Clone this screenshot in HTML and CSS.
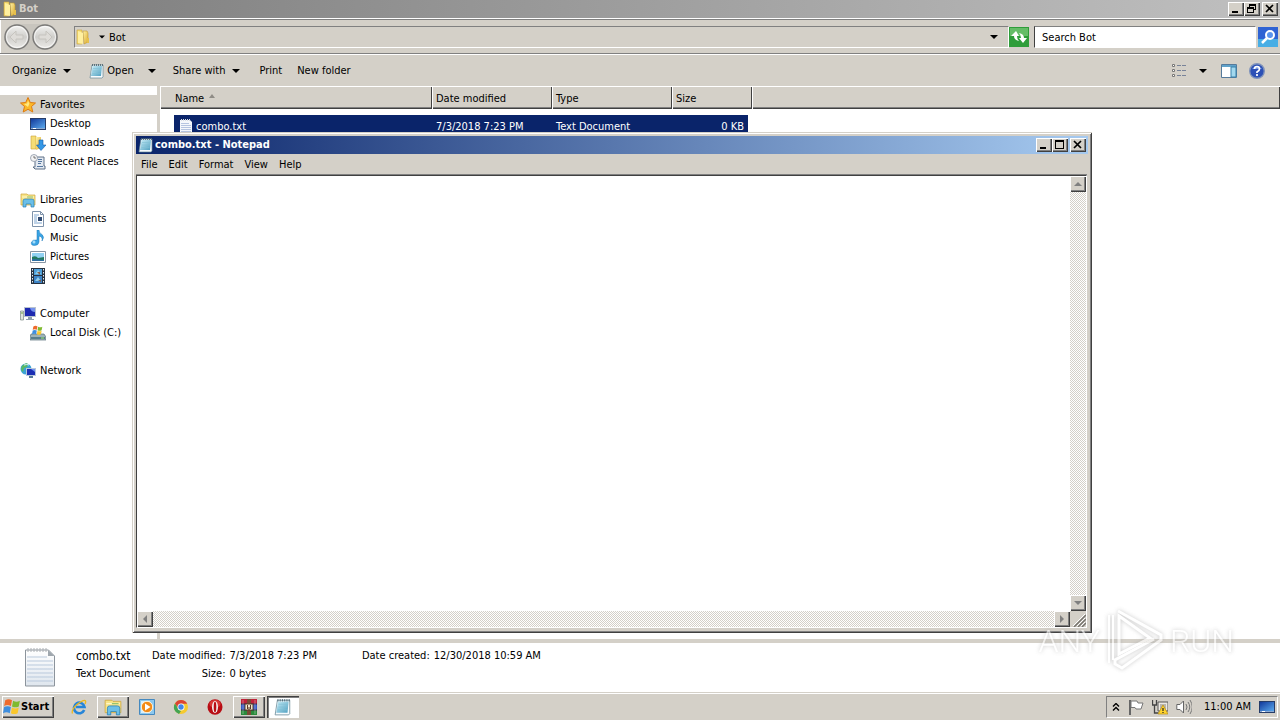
FILE: index.html
```html
<!DOCTYPE html>
<html lang="en">
<head>
<meta charset="utf-8">
<title>Bot</title>
<link rel="stylesheet" href="styles.css">
</head>
<body>
<svg class="defs" aria-hidden="true">
  <defs>
    <linearGradient id="gold" x2="1" y2="1"><stop offset="0" stop-color="#fff3a8"/><stop offset="1" stop-color="#dba92c"/></linearGradient>
    <linearGradient id="blue" x2="1" y2="1"><stop offset="0" stop-color="#123a9c"/><stop offset="1" stop-color="#5aa8ec"/></linearGradient>
    <linearGradient id="aqua" x2="1" y2="1"><stop offset="0" stop-color="#c9eef8"/><stop offset="1" stop-color="#4f9fc0"/></linearGradient>
    <linearGradient id="page" x2="0" y2="1"><stop offset="0" stop-color="#ffffff"/><stop offset="1" stop-color="#dfe6ee"/></linearGradient>
    <linearGradient id="disc" x2="0" y2="1"><stop offset="0" stop-color="#f4f4f2"/><stop offset=".5" stop-color="#cfcecb"/><stop offset="1" stop-color="#ecebe8"/></linearGradient>
    <symbol id="folder" viewBox="0 0 16 16"><path d="M2 1h5v14H2z" fill="#f5dd76" stroke="#c9a13a" stroke-width=".6"/><path d="M8 2h4l1 2v9l-4 2z" fill="url(#gold)" stroke="#c39a30" stroke-width=".6"/><path d="M3 2l5 2v11l-5-1z" fill="#fff0a0"/><path d="M12 9h2v5h-2z" fill="#e6c04c"/></symbol>
    <symbol id="notepad" viewBox="0 0 16 16"><path d="M3 2h11v12l-1 1H1z" fill="#f7fbfd" stroke="#668896" stroke-width=".7"/><path d="M3.500 3h9.500l-1 10H2z" fill="url(#aqua)"/><path d="M4 5.500h8.500M4 8h8M3.500 10.500h8" stroke="#7fbfd4" stroke-width=".6"/><path d="M3.500 1v2M5.500 1v2M7.500 1v2M9.500 1v2M11.500 1v2M13.500 1v2" stroke="#47606b" stroke-width=".8"/></symbol>
    <symbol id="txt" viewBox="0 0 32 40"><path d="M1.500 3h23l6 6v30h-29z" fill="url(#page)" stroke="#8c949c"/><path d="M24 3v6h6.500z" fill="#9fa7ae"/><path d="M3 10h20M3 14h26M3 18h26M3 22h26M3 26h26M3 30h26M3 34h26" stroke="#b9c9dc"/><path d="M4 1v4M7 1v4M10 1v4M13 1v4M16 1v4M19 1v4M22 1v4" stroke="#aeb2b6"/></symbol>
    <symbol id="txtsmall" viewBox="0 0 16 16"><path d="M2 2h10l2 2v12H2z" fill="#f4f7fb"/><path d="M3 5.500h8M3 7.500h10M3 9.500h10M3 11.500h10M3 13.500h10" stroke="#b5c4e0"/><path d="M3.500 1v2M5.500 1v2M7.500 1v2M9.500 1v2M11.500 1v2" stroke="#d8dce2"/></symbol>
    <symbol id="monitor" viewBox="0 0 16 16"><path d="M0 2h16v12H0z" fill="#263c68"/><path d="M1 3h14v9H1z" fill="url(#blue)"/><path d="M1 12h14v1H1z" fill="#8cabd4"/><path d="M3 12h3v1H3z" fill="#fff"/></symbol>
    <symbol id="library" viewBox="0 0 16 16"><path d="M1 2h6l1 1h7v10H1z" fill="#f7e488" stroke="#cfa63c" stroke-width=".7"/><path d="M2 5h12" stroke="#fff8ce"/><path d="M7 5h6" stroke="#8ec06a"/><path d="M3 15V9q0-2 2-2h7q2 0 2 2v6h-3v-3H6v3z" fill="#6bbfe8" stroke="#287fb5" stroke-width=".7"/></symbol>
    <symbol id="star" viewBox="0 0 16 16"><path d="M8 .5l2.300 5 5.200.5-4 3.500 1.300 5.500L8 12.300 3.200 15l1.300-5.500-4-3.500 5.200-.5z" fill="#fbb829" stroke="#dd7b12"/><path d="M8 3.500l1.400 3.200L8 10 4 7l3-.5z" fill="#ffe880"/></symbol>
    <symbol id="download" viewBox="0 0 16 16"><path d="M1 1h5v13H1z" fill="#f5dd76" stroke="#c9a13a" stroke-width=".6"/><path d="M6 2h5v11l-5 2z" fill="url(#gold)"/><path d="M9 5h4v5h3l-5 5.500L6.500 10H9z" fill="#3397e6" stroke="#145da8" stroke-width=".6"/></symbol>
    <symbol id="recent" viewBox="0 0 16 16"><path d="M5 3h9v9h1v3H5l-2-2h2z" fill="#e3e9f1" stroke="#5f7187"/><path d="M8 5.500h4M8 7.500h4M8 9.500h3M7 12.500h6" stroke="#5577a0"/><circle cx="4" cy="4" r="3.500" fill="#f3f3f3" stroke="#8b96a4" stroke-width=".8"/><path d="M4 2v2h2" fill="none" stroke="#555" stroke-width=".8"/></symbol>
    <symbol id="doc" viewBox="0 0 16 16"><path d="M2.500.5h8l3 3v12h-11z" fill="#fff" stroke="#7f93ab"/><path d="M10.500.5v3h3" fill="none" stroke="#7f93ab"/><path d="M4 4h5M4 6h3M4 8h3M4 10h3M4 12h8" stroke="#7fa6d0"/><path d="M8 6h4v4H8z" fill="#304b72"/></symbol>
    <symbol id="music" viewBox="0 0 16 16"><path d="M7 0l2 0q0 3 3 4.500Q15 7 12 11q1-4-3-5v6q-.5 3.500-4.500 3.500T1.500 12Q2.500 9.500 7 10z" fill="#3aa4e4" stroke="#1d79b9" stroke-width=".5"/><circle cx="4" cy="12" r="1.500" fill="#a4dcf9"/></symbol>
    <symbol id="picture" viewBox="0 0 16 16"><path d="M.5 2.500h15v11H.5z" fill="#fff" stroke="#8795a3"/><path d="M2 4h12v8H2z" fill="#91d1f2"/><path d="M2 8q4-2 6 1l6-1v4H2z" fill="#21795f"/><path d="M2 10q5 0 12 1v1H2z" fill="#2c6fa2"/></symbol>
    <symbol id="video" viewBox="0 0 16 16"><path d="M1 0h14v16H1z" fill="#263240"/><path d="M4 1h8v6H4z" fill="#4d9fd8"/><path d="M4 8h8v7H4z" fill="#3c83c6"/><path d="M5 6l3-4 3 4zM5 13l3-4 3 4z" fill="#8fcdea"/><path d="M7 4h3v3zM8 12h3v2z" fill="#805c4a"/><path d="M2.500 1v15M13.500 1v15" stroke="#e6eef5" stroke-dasharray="1.500 1.500"/></symbol>
    <symbol id="computer" viewBox="0 0 16 16"><path d="M.5 5h3v9h-3z" fill="#dfe5dc" stroke="#7c8a85" stroke-width=".7"/><path d="M1 7h2" stroke="#6ba23e"/><path d="M4 1h12v10H4z" fill="#b8c2cf"/><path d="M5 2h10v8H5z" fill="#1d29b0"/><path d="M10 2h5v4q-4 0-5-4z" fill="#7390ed"/><path d="M8 11h4v2h2v1H6v-1h2z" fill="#8fa0b0"/></symbol>
    <symbol id="flag4" viewBox="0 0 16 16"><path d="M2 2q3-2 6 0L7 7Q4 5.500 1 7z" fill="#ee6b2d"/><path d="M9 2.500q3 1.500 6 0L14 7.500q-3 1.500-6 0z" fill="#7fba30"/><path d="M1 8q3-1.500 6 0l-1 5.500Q3 12 0 13.500z" fill="#3e8ede"/><path d="M8 8.500q3 1.500 6 0L13 13.500q-3 1.500-6 0z" fill="#fac72c"/></symbol>
    <symbol id="disk" viewBox="0 0 16 16"><path d="M1 9h13l2 3v3H0v-3z" fill="#9db2b8" stroke="#5a717b" stroke-width=".7"/><path d="M1 12h14v2H1z" fill="#587d8b"/><path d="M11 13h3" stroke="#9fec70"/><use href="#flag4" x="2" y="0" width="11" height="11"/></symbol>
    <symbol id="network" viewBox="0 0 16 16"><circle cx="6" cy="6" r="5.500" fill="#3ba3d6"/><path d="M2 3q4-4 6-2l-1 3-3 1-1 4Q0 7 2 3z" fill="#59b963"/><path d="M4 2q3-1 5 0" stroke="#d9f4ff" fill="none"/><path d="M6 5h10v8H6z" fill="#b9c8da"/><path d="M7 6h8v6H7z" fill="#1b2fb4"/><path d="M11 6h4v3z" fill="#6f92f0"/><path d="M9 13h4v2H9z" fill="#587b9a"/></symbol>
    <symbol id="ie" viewBox="0 0 16 16"><path d="M13.200 11A5.300 5.300 0 1 1 13.500 8H5" fill="none" stroke="#2685d8" stroke-width="2.600"/><path d="M1.500 14.500Q0 11 6 5.500 13 0 14.500 2q.5 1-.5 3" fill="none" stroke="#edb91e" stroke-width="1.300"/></symbol>
    <symbol id="wmp" viewBox="0 0 16 16"><path d="M.5.5h15v15H.5z" fill="#8cc8ee" stroke="#4589bf"/><path d="M2 2h9v12H2z" fill="#d7effc"/><circle cx="8" cy="8" r="5.700" fill="#f38b16" stroke="#fff3dc"/><path d="M6 4.500L11.500 8 6 11.500z" fill="#fff"/></symbol>
    <symbol id="chrome" viewBox="0 0 16 16"><circle cx="8" cy="8" r="7" fill="#f5ca2e"/><path d="M2 4.500A7 7 0 0 1 14.200 4.700H8L5 9z" fill="#dc4334"/><path d="M2 4.500L6 11l2 1-2 3A7 7 0 0 1 2 4.500z" fill="#43a454"/><circle cx="8" cy="8" r="3.500" fill="#fff"/><circle cx="8" cy="8" r="2.700" fill="#4386e8"/></symbol>
    <symbol id="opera" viewBox="0 0 16 16"><ellipse cx="8" cy="8" rx="7.500" ry="7.700" fill="#b80d14"/><ellipse cx="8" cy="5" rx="5.500" ry="4" fill="#d93836"/><ellipse cx="8" cy="8" rx="3" ry="6" fill="#f2f0ee"/><ellipse cx="8" cy="8" rx="1.300" ry="5.300" fill="#b80d14"/></symbol>
    <symbol id="rar" viewBox="0 0 18 18"><path d="M1 1h16v5H1z" fill="#c0223a"/><path d="M1 6h16v6H1z" fill="#3557c1"/><path d="M1 12h16v5H1z" fill="#2c8a3c"/><path d="M1 6h16M1 12h16" stroke="#332443"/><path d="M7 1h4v16H7z" fill="#7c4a35"/><path d="M5 6h8v6H5z" fill="#f0e6cc" stroke="#5a402c"/><path d="M7.500 7v4M10.500 7v4M9 9v3" stroke="#5b3a29"/><path d="M3 2v14M15 2v14" stroke="#fff" stroke-opacity=".35"/></symbol>
    <symbol id="min" viewBox="0 0 12 10"><path d="M2 7h6v2H2z"/></symbol>
    <symbol id="max" viewBox="0 0 12 10"><path d="M1 0h9v9H1zM2 2v6h7V2z" fill-rule="evenodd"/></symbol>
    <symbol id="restore" viewBox="0 0 12 10"><path d="M3 0h7v6H8v3H1V3h2zM4 2v1h4v2h1V2zM2 5v3h5V5z" fill-rule="evenodd"/></symbol>
    <symbol id="close" viewBox="0 0 12 10"><path d="M2 1l7 7M9 1L2 8" stroke="#000" stroke-width="1.700"/></symbol>
    <symbol id="down" viewBox="0 0 8 8"><path d="M0 2h8L4 6z"/></symbol>
    <symbol id="arrowback" viewBox="0 0 26 26"><circle cx="13" cy="13" r="12" fill="url(#disc)" stroke="#7b7a78" stroke-width="1.400"/><circle cx="13" cy="13" r="10.500" fill="none" stroke="#fff" stroke-opacity=".7"/><path d="M6 13l6-6v4h7v4h-7v4z" fill="#dedcd8" stroke="#c6c4bf"/></symbol>
  </defs>
</svg>

<main class="explorer">
  <header class="titlebar inactive">
    <svg class="i16"><use href="#folder"/></svg><h1>Bot</h1>
    <div class="winbtns">
      <button class="raised" aria-label="Minimize"><svg><use href="#min"/></svg></button><button class="raised" aria-label="Restore"><svg><use href="#restore"/></svg></button><button class="raised apart" aria-label="Close"><svg><use href="#close"/></svg></button>
    </div>
  </header>

  <div class="addressbar">
    <div class="navbtns">
      <button aria-label="Back"><svg><use href="#arrowback"/></svg></button>
      <button aria-label="Forward"><svg class="flip"><use href="#arrowback"/></svg></button>
    </div>
    <div class="path">
      <svg class="i16"><use href="#folder"/></svg>
      <button class="crumb"><svg class="tiny"><use href="#down"/></svg>Bot</button>
      <button class="drop" aria-label="Previous locations"><svg class="i8"><use href="#down"/></svg></button>
    </div>
    <button class="refresh" aria-label="Refresh"><svg viewBox="0 0 20 20"><path d="M0 0h20v20H0z" fill="#2f9d3a"/><path d="M1 1h18v8H1z" fill="#65bd67"/><path d="M2 9l5-5 3 5H8q0 3 2 5-5-1-5-5zM18 11l-4 5-4-5h2q0-3-2-5 5 1 5 5z" fill="#fff"/></svg></button>
    <input class="search" type="text" value="Search Bot" aria-label="Search Bot">
    <button class="go" aria-label="Search"><svg viewBox="0 0 20 20"><path d="M0 0h20v20H0z" fill="#2f63d3"/><path d="M0 12h20v8H0z" fill="#48aee5"/><circle cx="12" cy="8" r="4" fill="#5a94ed" stroke="#fff" stroke-width="2"/><path d="M9 11l-5 5" stroke="#fff" stroke-width="2.500"/></svg></button>
  </div>

  <div class="toolbar">
    <button>Organize<svg class="i8"><use href="#down"/></svg></button>
    <button class="open"><svg class="i16"><use href="#notepad"/></svg>Open<svg class="i8 far"><use href="#down"/></svg></button>
    <button class="share">Share with<svg class="i8"><use href="#down"/></svg></button>
    <button class="print">Print</button>
    <button>New folder</button>
    <div class="views">
      <button aria-label="Change view"><svg class="i16" viewBox="0 0 16 16"><path d="M1.500 1.500h2v2h-2zM1.500 6.500h2v2h-2zM1.500 11.500h2v2h-2z" fill="#fff" stroke="#777"/><path d="M6 2.500h4M11 2.500h4M6 7.500h4M11 7.500h4M6 12.500h4M11 12.500h4" stroke="#788399"/></svg></button>
      <button aria-label="More views"><svg class="i8"><use href="#down"/></svg></button>
      <button aria-label="Preview pane"><svg class="i16" viewBox="0 0 16 16"><path d="M.5 1.500h15v13H.5z" fill="#fff" stroke="#557a9b"/><path d="M1 2h14v2H1z" fill="#5fa2ca"/><path d="M10 4h5v10h-5z" fill="#a2d8ee" stroke="#3980aa"/></svg></button>
      <button aria-label="Help"><svg class="i16" viewBox="0 0 16 16"><circle cx="8" cy="8" r="7.300" fill="#2c50b6" stroke="#7f93bb" stroke-width="1.400"/><path d="M3 6q5-6 10 0z" fill="#7a9ce5"/><path d="M5.500 6q0-2.500 2.500-2.500T10.500 6Q10.500 7.500 8 9v1M8 11v2" fill="none" stroke="#fff" stroke-width="1.700"/></svg></button>
    </div>
  </div>

  <div class="content">
    <nav class="tree">
      <ul>
        <li><a class="top selected" href="#"><svg class="i16"><use href="#star"/></svg>Favorites</a></li>
        <li><a href="#"><svg class="i16"><use href="#monitor"/></svg>Desktop</a></li>
        <li><a href="#"><svg class="i16"><use href="#download"/></svg>Downloads</a></li>
        <li><a href="#"><svg class="i16"><use href="#recent"/></svg>Recent Places</a></li>
      </ul>
      <ul>
        <li><a class="top" href="#"><svg class="i16"><use href="#library"/></svg>Libraries</a></li>
        <li><a href="#"><svg class="i16"><use href="#doc"/></svg>Documents</a></li>
        <li><a href="#"><svg class="i16"><use href="#music"/></svg>Music</a></li>
        <li><a href="#"><svg class="i16"><use href="#picture"/></svg>Pictures</a></li>
        <li><a href="#"><svg class="i16"><use href="#video"/></svg>Videos</a></li>
      </ul>
      <ul>
        <li><a class="top" href="#"><svg class="i16"><use href="#computer"/></svg>Computer</a></li>
        <li><a href="#"><svg class="i16"><use href="#disk"/></svg>Local Disk (C:)</a></li>
      </ul>
      <ul>
        <li><a class="top" href="#"><svg class="i16"><use href="#network"/></svg>Network</a></li>
      </ul>
    </nav>
    <section class="files">
      <table>
        <colgroup><col class="c-name"><col class="c-mid"><col class="c-mid"><col class="c-size"><col></colgroup>
        <thead><tr><th class="name">Name<svg class="sort" viewBox="0 0 6 4"><path d="M0 4h6L3 0z" fill="#8f8c86"/></svg></th><th>Date modified</th><th>Type</th><th>Size</th><th></th></tr></thead>
        <tbody><tr><td><div class="cell first"><svg class="i16"><use href="#txtsmall"/></svg>combo.txt</div></td><td><div class="cell">7/3/2018 7:23 PM</div></td><td><div class="cell">Text Document</div></td><td><div class="cell last">0 KB</div></td><td></td></tr></tbody>
      </table>
    </section>
  </div>

  <footer class="details">
    <svg class="big"><use href="#txt"/></svg>
    <div class="about"><strong>combo.txt</strong><span>Text Document</span></div>
    <dl class="props"><dt>Date modified:</dt><dd>7/3/2018 7:23 PM</dd><dt>Size:</dt><dd>0 bytes</dd></dl>
    <dl class="props created"><dt>Date created:</dt><dd>12/30/2018 10:59 AM</dd></dl>
  </footer>
</main>

<section class="notepad" aria-label="combo.txt - Notepad">
  <header class="titlebar active">
    <svg class="i16"><use href="#notepad"/></svg><h2>combo.txt - Notepad</h2>
    <div class="winbtns">
      <button class="raised" aria-label="Minimize"><svg><use href="#min"/></svg></button><button class="raised" aria-label="Maximize"><svg><use href="#max"/></svg></button><button class="raised apart" aria-label="Close"><svg><use href="#close"/></svg></button>
    </div>
  </header>
  <div class="menu"><button>File</button><button>Edit</button><button>Format</button><button>View</button><button>Help</button></div>
  <div class="editor">
    <textarea aria-label="Text"></textarea>
    <div class="scroll vert">
      <button class="raised" aria-label="Scroll up"><svg class="i8"><path d="M0 6h8L4 2z"/></svg></button>
      <button class="raised" aria-label="Scroll down"><svg class="i8"><path d="M0 2h8L4 6z"/></svg></button>
    </div>
    <div class="scroll">
      <button class="raised" aria-label="Scroll left"><svg class="i8"><path d="M6 0v8L2 4z"/></svg></button>
      <button class="raised" aria-label="Scroll right"><svg class="i8"><path d="M2 0v8l4-4z"/></svg></button>
    </div>
    <svg class="grip" viewBox="0 0 16 16"><path d="M4 16L16 4M8 16l8-8M12 16l4-4" stroke="#77746e" stroke-width="1.500"/><path d="M3 15L15 3M7 15l8-8M11 15l4-4" stroke="#fff"/></svg>
  </div>
</section>

<div class="watermark" aria-hidden="true">
  <span>ANY</span>
  <svg viewBox="0 0 60 66"><path d="M4 7v48M8 7v45" fill="none" stroke="#fff" stroke-width="2"/><path d="M14 8v38l31-16z" fill="none" stroke="#fff" stroke-width="3"/><path d="M13 3l43 24v5L17 60l-7-4v-4l39-21" fill="none" stroke="#fff" stroke-width="3"/></svg>
  <span>RUN</span>
</div>

<footer class="taskbar">
  <button class="start raised"><svg class="i18"><use href="#flag4"/></svg>Start</button>
  <div class="tasks">
    <button aria-label="Internet Explorer"><svg class="i16"><use href="#ie"/></svg></button>
    <button class="raised" aria-label="Windows Explorer"><svg class="i18"><use href="#library"/></svg></button>
    <button aria-label="Media Player"><svg class="i16"><use href="#wmp"/></svg></button>
    <button aria-label="Chrome"><svg class="i16"><use href="#chrome"/></svg></button>
    <button aria-label="Opera"><svg class="i16"><use href="#opera"/></svg></button>
    <button class="raised" aria-label="WinRAR"><svg class="i18"><use href="#rar"/></svg></button>
    <button class="pressed" aria-label="Notepad"><svg class="i18"><use href="#notepad"/></svg></button>
  </div>
  <div class="tray">
    <button aria-label="Show hidden icons"><svg class="i8" viewBox="0 0 8 8"><path d="M1 3.500l3-3 3 3M1 7.500l3-3 3 3" fill="none" stroke="#000" stroke-width="1.400"/></svg></button>
    <svg class="i16" viewBox="0 0 16 16"><path d="M2 1v15" stroke="#666" stroke-width="2"/><path d="M3 2h6l1 2h5l-2 6H8L7 8.500H3z" fill="#fff" stroke="#777"/></svg>
    <svg class="i16" viewBox="0 0 16 16"><path d="M6 3h10v9H6z" fill="#ece9e3" stroke="#555"/><path d="M8 5h6v5H8z" fill="#b9b6b0"/><path d="M.5 1v5h4V1M2.500 6v8h4" fill="none" stroke="#444" stroke-width="1.300"/><path d="M11 6l5 9H6z" fill="#ffd42e" stroke="#b88c10" stroke-width=".7"/><path d="M11 9v3M11 13v1" stroke="#222" stroke-width="1.200"/></svg>
    <svg class="i16" viewBox="0 0 16 16"><path d="M.8 5.500H4L7.500 2v12L4 10.500H.8z" fill="#fff" stroke="#666"/><path d="M10 5q2 3 0 6M12 3q3.500 5 0 10M14 1q4.500 7 0 14" fill="none" stroke="#777"/></svg>
    <time>11:00 AM</time>
    <button aria-label="Show desktop"><svg class="i16"><use href="#monitor"/></svg></button>
  </div>
</footer>
</body>
</html>
```
FILE: styles.css
```css
* { box-sizing: border-box; }

body {
  margin: 0;
  height: 100vh;
  display: flex;
  flex-direction: column;
  overflow: hidden;
  background: #d4d0c8;
  color: #000;
  font: 11px/15px "DejaVu Sans Condensed", "DejaVu Sans", sans-serif;
}

button, input, textarea {
  font: inherit;
  color: inherit;
  border: 0;
  padding: 0;
  margin: 0;
  background: none;
  border-radius: 0;
}
button { display: flex; align-items: center; white-space: nowrap; }
ul, dl, dd, h1, h2 { margin: 0; padding: 0; list-style: none; }
a { color: inherit; text-decoration: none; }
svg { display: block; flex: none; }

.defs { position: absolute; width: 0; height: 0; }
.i8 { width: 8px; height: 8px; }
.i16 { width: 16px; height: 16px; }
.i18 { width: 18px; height: 18px; }

.raised {
  background: #d4d0c8;
  box-shadow: inset 1px 1px #fff, inset -1px -1px #404040, inset -2px -2px #808080;
}
.pressed {
  background: #fff;
  box-shadow: inset 1px 1px #404040, inset 2px 2px #808080, inset -1px -1px #fff;
}

/* Window chrome */
.explorer { flex: 1; min-height: 0; display: flex; flex-direction: column; }
.titlebar { display: flex; align-items: center; gap: 1px; height: 18px; flex: none; padding: 0 2px; }
.titlebar h1, .titlebar h2 { font-size: 11px; line-height: 18px; font-weight: bold; }
.inactive { background: linear-gradient(90deg, #7c7c7c, #c0c0c0); color: #d4d0c8; }
.active { background: linear-gradient(90deg, #0a246a, #a6caf0); color: #fff; }
.winbtns { display: flex; margin-left: auto; }
.winbtns button { width: 16px; height: 14px; padding: 2px; }
.winbtns svg { width: 12px; height: 10px; }
.winbtns .apart { margin-left: 2px; }

/* Address bar */
.addressbar {
  flex: none;
  display: flex;
  align-items: center;
  height: 36px;
  padding: 2px 2px 0 4px;
  border-top: 1px solid #fff;
  border-bottom: 1px solid #808080;
  box-shadow: inset 0 1px #808080, inset 1px 0 #fff;
}
.navbtns { display: flex; gap: 2px; background: #c8c5be; border-radius: 14px; }
.navbtns svg { width: 26px; height: 26px; }
.flip { transform: scaleX(-1); }
.path {
  flex: 1;
  display: flex;
  align-items: center;
  height: 22px;
  margin-left: 16px;
  border: 1px solid;
  border-color: #808080 #fff #fff #808080;
}
.tiny { width: 6px; height: 6px; }
.crumb { gap: 4px; margin-left: 8px; }
.drop { margin-left: auto; padding: 0 10px; }
.refresh svg, .go svg { width: 20px; height: 20px; }
.search {
  width: 222px;
  height: 22px;
  margin: 0 2px 0 5px;
  padding: 0 7px;
  background: #fff;
  border: 1px solid;
  border-color: #808080 #fff #fff #404040;
}

/* Command bar */
.toolbar {
  flex: none;
  display: flex;
  align-items: center;
  height: 32px;
  padding: 0 15px 0 12px;
  border-top: 1px solid #fff;
}
.toolbar .i8 { margin-left: 7px; }
.toolbar .i8.far { margin-left: 14px; }
.open { margin-left: 18px; }
.open .i16 { margin-right: 2px; }
.share { margin-left: 17px; }
.print { margin: 0 15px 0 19px; }
.views { display: flex; align-items: center; gap: 12px; margin-left: auto; }
.toolbar .views .i8 { margin: 0 2px 0 0; }

/* Content */
.content { flex: 1; min-height: 0; display: flex; background: #fff; }
.tree {
  flex: none;
  width: 160px;
  padding-top: 9px;
  border-right: 3px solid #d4d0c8;
}
.tree ul { margin-bottom: 19px; }
.tree a { display: flex; align-items: center; gap: 4px; height: 19px; padding-left: 30px; line-height: 19px; }
.tree .top { padding-left: 20px; }
.tree .selected { background: #d4d0c8; }

.files { flex: 1; }
.files table { width: 100%; table-layout: fixed; border-collapse: collapse; }
.c-name { width: 272px; }
.c-mid { width: 120px; }
.c-size { width: 80px; }
.files th {
  height: 23px;
  padding: 1px 4px 0;
  text-align: left;
  font-weight: normal;
  background: #d4d0c8;
  box-shadow: inset 1px 1px #fff, inset -1px -1px #404040, inset 0 -2px #808080;
}
.files th.name { padding-left: 15px; }
.sort { display: inline-block; width: 6px; height: 4px; margin-left: 5px; vertical-align: 4px; }
.files td { padding: 6px 0 0; }
.cell {
  display: flex;
  align-items: center;
  height: 22px;
  padding: 0 4px;
  background: #0a246a;
  color: #fff;
}
.first { margin-left: 14px; gap: 2px; }
.last { margin-right: 4px; justify-content: flex-end; }

/* Details pane */
.details {
  flex: none;
  display: flex;
  height: 53px;
  padding: 4px 24px 0;
  border-top: 4px solid #d4d0c8;
  background: #fff;
  line-height: 18px;
}
.big { width: 32px; height: 40px; }
.about { display: flex; flex-direction: column; width: 76px; margin-left: 20px; white-space: nowrap; }
.about strong { font-size: 12px; font-weight: normal; }
.props {
  display: grid;
  grid-template-columns: max-content max-content;
  grid-auto-rows: 18px;
  column-gap: 4px;
}
.props dt { text-align: right; }
.created { margin-left: 45px; }

/* Notepad window, floating over the desktop */
.notepad {
  position: absolute;
  left: 132px;
  top: 132px;
  width: 960px;
  height: 501px;
  display: flex;
  flex-direction: column;
  padding: 4px;
  background: #d4d0c8;
  box-shadow: inset 1px 1px #d4d0c8, inset -1px -1px #404040, inset 2px 2px #fff, inset -2px -2px #808080;
}
.menu { display: flex; gap: 11px; flex: none; height: 21px; padding: 0 5px; }
.editor {
  flex: 1;
  display: grid;
  grid-template: 1fr 16px / 1fr 16px;
  margin: 0 1px 1px 0;
  border: 1px solid;
  border-color: #404040 #fff #fff #404040;
  box-shadow: 0 -1px #808080;
}
.editor textarea { background: #fff; resize: none; outline: none; width: 100%; height: 100%; }
.scroll {
  display: flex;
  justify-content: space-between;
  background: repeating-conic-gradient(#fff 0 25%, #d4d0c8 0 50%) 0 0 / 2px 2px;
}
.vert { flex-direction: column; }
.scroll button { width: 16px; height: 16px; justify-content: center; }
.scroll svg { fill: #808080; }
.grip { width: 16px; height: 16px; }

/* Watermark */
.watermark {
  position: absolute;
  right: 46px;
  bottom: 46px;
  display: flex;
  align-items: center;
  gap: 5px;
  color: #fff;
  font: 300 32px/66px Roboto, "Liberation Sans", sans-serif;
  opacity: .65;
  filter: drop-shadow(0 0 2px #aaa);
  pointer-events: none;
}
.watermark svg { width: 60px; height: 66px; }

/* Taskbar */
.taskbar {
  flex: none;
  display: flex;
  align-items: center;
  height: 28px;
  padding: 2px;
  border-top: 1px solid #d4d0c8;
  box-shadow: inset 0 1px #fff;
}
.start { width: 52px; height: 22px; padding-left: 1px; font-weight: bold; font-size: 11px; }
.tasks { display: flex; gap: 2px; margin-left: 9px; }
.tasks button { width: 32px; height: 22px; justify-content: center; }
.tray {
  display: flex;
  align-items: center;
  gap: 8px;
  height: 22px;
  margin-left: auto;
  padding: 0 2px 0 5px;
  border: 1px solid;
  border-color: #808080 #fff #fff #808080;
}
.tray time { margin-left: 4px; white-space: nowrap; }
```
